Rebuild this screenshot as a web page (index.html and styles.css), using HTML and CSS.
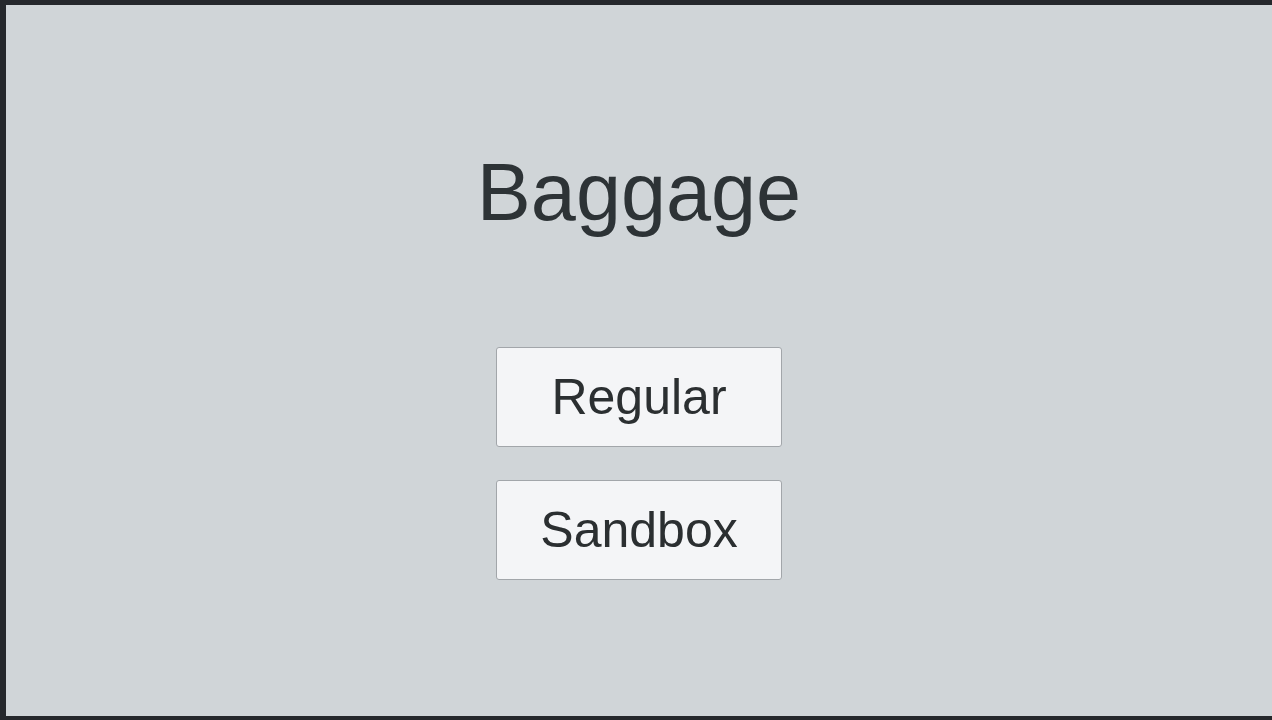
FILE: index.html
```html
<!DOCTYPE html>
<html lang="en">
<head>
<meta charset="utf-8">
<title>Baggage</title>
<link rel="stylesheet" href="styles.css">
</head>
<body>
<main class="screen">
  <h1 class="title">Baggage</h1>
  <div class="menu">
    <button class="menu-btn">Regular</button>
    <button class="menu-btn">Sandbox</button>
  </div>
</main>
</body>
</html>
```
FILE: styles.css
```css
html, body {
  margin: 0;
  padding: 0;
  background: #25282c;
}
.screen {
  box-sizing: border-box;
  width: 1272px;
  height: 720px;
  border-style: solid;
  border-color: #25282c;
  border-width: 5px 0 4px 6px;
  background: #d0d5d8;
  display: flex;
  flex-direction: column;
  align-items: center;
  font-family: "Liberation Sans", Arial, sans-serif;
}
.title {
  margin: 147px 0 0 0;
  font-size: 81px;
  line-height: 81px;
  font-weight: normal;
  color: #2d3336;
}
.menu {
  margin-top: 114px;
  display: flex;
  flex-direction: column;
  gap: 33px;
}
.menu-btn {
  box-sizing: border-box;
  width: 286px;
  height: 100px;
  display: flex;
  align-items: center;
  justify-content: center;
  padding: 0;
  background: #f4f5f7;
  border: 1px solid #a2a6aa;
  border-radius: 3px;
  font-family: "Liberation Sans", Arial, sans-serif;
  font-size: 50px;
  color: #2b2f31;
}
```
